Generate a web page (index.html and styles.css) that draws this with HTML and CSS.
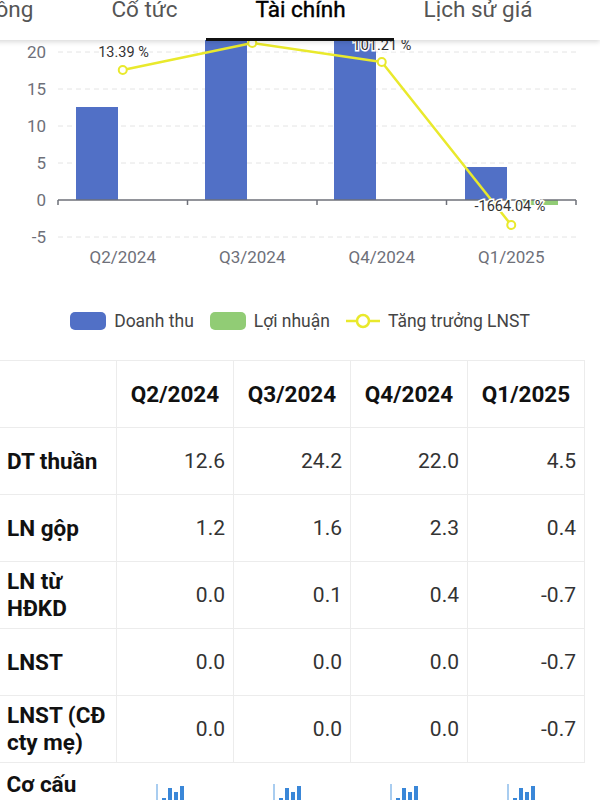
FILE: index.html
```html
<!DOCTYPE html>
<html lang="vi">
<head>
    <meta charset="UTF-8">
    <meta name="viewport" content="width=device-width, initial-scale=1.0">
    <title>Tài chính</title>
    <link rel="stylesheet" href="styles.css">
</head>
<body>
    <!-- Tabs -->
    <nav class="tabs">
        <div class="tab">Cổ đông</div>
        <div class="tab">Cổ tức</div>
        <div class="tab active">Tài chính</div>
        <div class="tab">Lịch sử giá</div>
    </nav>

    <!-- Chart -->
    <svg class="chart" viewBox="0 40 600 240" width="600" height="240">
        <g class="grid">
            <line x1="58" y1="52" x2="576" y2="52"/>
            <line x1="58" y1="89" x2="576" y2="89"/>
            <line x1="58" y1="126" x2="576" y2="126"/>
            <line x1="58" y1="163" x2="576" y2="163"/>
            <line x1="58" y1="237" x2="576" y2="237"/>
        </g>
        <g class="y-labels">
            <text x="46" y="52">20</text>
            <text x="46" y="89">15</text>
            <text x="46" y="126">10</text>
            <text x="46" y="163">5</text>
            <text x="46" y="200">0</text>
            <text x="46" y="237">-5</text>
        </g>
        <g class="bars-revenue">
            <rect x="76" y="107" width="42" height="93"/>
            <rect x="205" y="21" width="42" height="179"/>
            <rect x="334" y="37" width="42" height="163"/>
            <rect x="465" y="167" width="42" height="33"/>
        </g>
        <g class="bars-profit">
            <rect x="516" y="200" width="42" height="5"/>
        </g>
        <g class="axis">
            <line x1="58" y1="200" x2="576" y2="200"/>
            <line x1="58" y1="200" x2="58" y2="205"/>
            <line x1="187.5" y1="200" x2="187.5" y2="205"/>
            <line x1="317" y1="200" x2="317" y2="205"/>
            <line x1="446.5" y1="200" x2="446.5" y2="205"/>
            <line x1="576" y1="200" x2="576" y2="205"/>
        </g>
        <polyline class="growth-line" points="122.75,70 252.25,43 381.75,62 511.25,225"/>
        <g class="growth-points">
            <circle cx="122.75" cy="70" r="4"/>
            <circle cx="252.25" cy="43" r="4"/>
            <circle cx="381.75" cy="62" r="4"/>
            <circle cx="511.25" cy="225" r="4"/>
        </g>
        <g class="point-labels">
            <text x="123.5" y="52">13.39 %</text>
            <text x="382" y="45">101.21 %</text>
            <text x="510" y="206">-1664.04 %</text>
        </g>
        <g class="x-labels">
            <text x="122.75" y="257">Q2/2024</text>
            <text x="252.25" y="257">Q3/2024</text>
            <text x="381.75" y="257">Q4/2024</text>
            <text x="511.25" y="257">Q1/2025</text>
        </g>
    </svg>

    <!-- Legend -->
    <div class="legend">
        <span class="legend-item"><span class="swatch swatch-revenue"></span>Doanh thu</span>
        <span class="legend-item"><span class="swatch swatch-profit"></span>Lợi nhuận</span>
        <span class="legend-item">
            <svg class="legend-line" width="34" height="18" viewBox="0 0 34 18">
                <line x1="0" y1="9" x2="34" y2="9"/>
                <circle cx="17" cy="9" r="6"/>
            </svg>Tăng trưởng LNST</span>
    </div>

    <!-- Table -->
    <table class="fin-table">
        <colgroup>
            <col><col><col><col><col>
        </colgroup>
        <thead>
            <tr>
                <th></th>
                <th>Q2/2024</th>
                <th>Q3/2024</th>
                <th>Q4/2024</th>
                <th>Q1/2025</th>
            </tr>
        </thead>
        <tbody>
            <tr>
                <td class="label">DT thuần</td>
                <td>12.6</td><td>24.2</td><td>22.0</td><td>4.5</td>
            </tr>
            <tr>
                <td class="label">LN gộp</td>
                <td>1.2</td><td>1.6</td><td>2.3</td><td>0.4</td>
            </tr>
            <tr>
                <td class="label">LN từ HĐKD</td>
                <td>0.0</td><td>0.1</td><td>0.4</td><td>-0.7</td>
            </tr>
            <tr>
                <td class="label">LNST</td>
                <td>0.0</td><td>0.0</td><td>0.0</td><td>-0.7</td>
            </tr>
            <tr>
                <td class="label">LNST (CĐ cty mẹ)</td>
                <td>0.0</td><td>0.0</td><td>0.0</td><td>-0.7</td>
            </tr>
            <tr class="icon-row">
                <td class="label">Cơ cấu doanh thu</td>
                <td><svg class="mini-chart" width="30" height="26" viewBox="0 0 30 26"><rect class="mini-axis" x="0" y="0" width="2" height="26"/><rect x="6" y="14" width="4" height="12"/><rect x="12" y="4" width="4" height="22"/><rect x="18" y="8" width="4" height="18"/><rect x="24" y="2" width="4" height="24"/></svg></td>
                <td><svg class="mini-chart" width="30" height="26" viewBox="0 0 30 26"><rect class="mini-axis" x="0" y="0" width="2" height="26"/><rect x="6" y="14" width="4" height="12"/><rect x="12" y="4" width="4" height="22"/><rect x="18" y="8" width="4" height="18"/><rect x="24" y="2" width="4" height="24"/></svg></td>
                <td><svg class="mini-chart" width="30" height="26" viewBox="0 0 30 26"><rect class="mini-axis" x="0" y="0" width="2" height="26"/><rect x="6" y="14" width="4" height="12"/><rect x="12" y="4" width="4" height="22"/><rect x="18" y="8" width="4" height="18"/><rect x="24" y="2" width="4" height="24"/></svg></td>
                <td><svg class="mini-chart" width="30" height="26" viewBox="0 0 30 26"><rect class="mini-axis" x="0" y="0" width="2" height="26"/><rect x="6" y="14" width="4" height="12"/><rect x="12" y="4" width="4" height="22"/><rect x="18" y="8" width="4" height="18"/><rect x="24" y="2" width="4" height="24"/></svg></td>
            </tr>
        </tbody>
    </table>
</body>
</html>
```

FILE: styles.css
```css
/* General Reset */
* {
    margin: 0;
    padding: 0;
    box-sizing: border-box;
}

body {
    font-family: Roboto, 'Liberation Sans', sans-serif;
    background-color: #ffffff;
    color: #111;
    overflow: hidden;
}

/* Tabs */
.tabs {
    display: flex;
    gap: 78px;
    height: 40px;
    margin-left: -51px;
    background-color: #fff;
    position: relative;
    z-index: 1;
    box-shadow: 0 2px 5px rgba(0, 0, 0, 0.15);
}

.tab {
    position: relative;
    font-size: 22.5px;
    line-height: 24px;
    margin-top: -3px;
    color: #555;
    white-space: nowrap;
}

.tab.active {
    color: #000;
    -webkit-text-stroke: 0.4px #000;
}

.tab.active::after {
    content: '';
    position: absolute;
    left: -50px;
    right: -48px;
    top: 41px;
    height: 3px;
    background-color: #111;
}

/* Chart */
.chart {
    display: block;
    font-family: Roboto, 'Liberation Sans', sans-serif;
}

.grid line {
    stroke: #e4e4e4;
    stroke-width: 1;
    stroke-dasharray: 5 4;
}

.y-labels text {
    font-size: 17px;
    fill: #6e7079;
    text-anchor: end;
    dominant-baseline: central;
}

.x-labels text {
    font-size: 17px;
    fill: #6e7079;
    text-anchor: middle;
    dominant-baseline: central;
}

.bars-revenue rect {
    fill: #5170c6;
}

.bars-profit rect {
    fill: #91cc75;
}

.axis line {
    stroke: #6e7079;
    stroke-width: 1.5;
}

.growth-line {
    fill: none;
    stroke: #e9e92c;
    stroke-width: 2.5;
    stroke-linejoin: round;
}

.growth-points circle {
    fill: #fff;
    stroke: #e9e92c;
    stroke-width: 2;
}

.point-labels text {
    font-size: 14.5px;
    fill: #333;
    text-anchor: middle;
    dominant-baseline: central;
    stroke: #fff;
    stroke-width: 3px;
    paint-order: stroke;
}

/* Legend */
.legend {
    display: flex;
    justify-content: center;
    align-items: center;
    gap: 16px;
    height: 22px;
    margin-top: 30px;
    font-size: 17.5px;
    color: #444;
}

.legend-item {
    display: flex;
    align-items: center;
    gap: 8px;
}

.swatch {
    width: 36px;
    height: 18px;
    border-radius: 5px;
}

.swatch-revenue {
    background-color: #5170c6;
}

.swatch-profit {
    background-color: #91cc75;
}

.legend-line line {
    stroke: #e9e92c;
    stroke-width: 2.5;
}

.legend-line circle {
    fill: #fff;
    stroke: #e9e92c;
    stroke-width: 2.5;
}

/* Table */
.fin-table {
    width: 585px;
    margin-left: -1px;
    margin-top: 28px;
    border-collapse: collapse;
    table-layout: fixed;
}

.fin-table col {
    width: 117px;
}

.fin-table th,
.fin-table td {
    height: 67px;
    border: 1px solid #ececec;
    font-size: 21px;
    line-height: 27px;
}

.fin-table th {
    font-size: 22.5px;
    font-weight: 700;
    text-align: center;
    color: #111;
}

.fin-table td {
    text-align: right;
    padding-right: 8px;
    color: #333;
}

.fin-table td.label {
    text-align: left;
    padding-left: 7px;
    padding-right: 2px;
    font-size: 22.5px;
    font-weight: 700;
    color: #111;
}

.icon-row td {
    border: none;
    vertical-align: top;
    padding-top: 8px;
    text-align: center;
}

.icon-row td.label {
    padding-top: 8px;
}

.mini-chart {
    display: inline-block;
    margin-top: 13px;
}

.mini-chart rect {
    fill: #3a87d8;
}

.mini-chart .mini-axis {
    fill: #a9cdf0;
}
```
